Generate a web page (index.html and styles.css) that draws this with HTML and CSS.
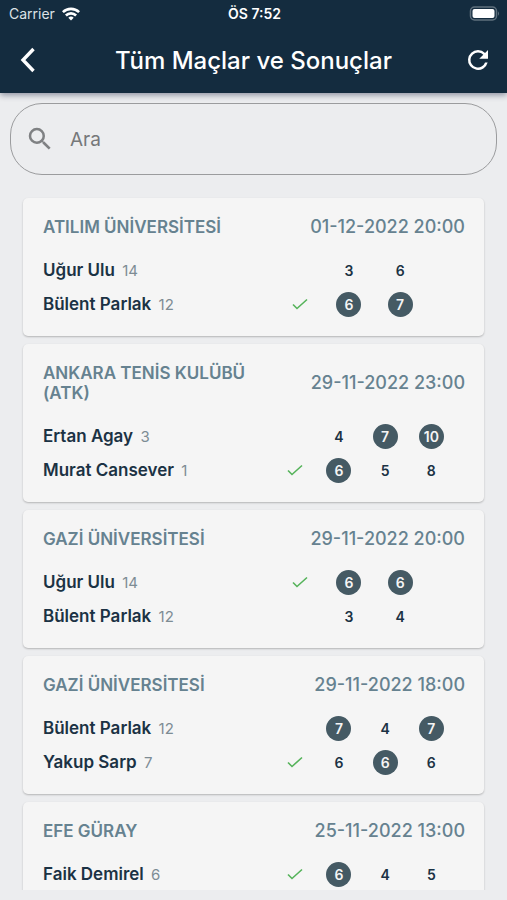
FILE: index.html
```html
<!DOCTYPE html>
<html lang="tr">

<head>
  <meta charset="utf-8">
  <title>Tüm Maçlar ve Sonuçlar</title>
  <meta name="viewport" content="width=device-width, initial-scale=1">
  <link rel="stylesheet" href="styles.css">
</head>

<body>
  <header class="topbar">
    <div class="status">
      <div class="carrier">
        <span>Carrier</span>
        <svg width="18" height="14" viewBox="0 0 18 14" fill="none" stroke="#fff" stroke-width="2.6">
          <path d="M0.9 5.2a11.5 11.5 0 0 1 16.2 0" />
          <path d="M3.9 8.5a7.2 7.2 0 0 1 10.2 0" />
          <path d="M9 13.6l-2.7-2.8a3.9 3.9 0 0 1 5.4 0z" fill="#fff" stroke="none" />
        </svg>
      </div>
      <span class="clock">ÖS 7:52</span>
      <div class="battery">
        <svg width="31" height="15" viewBox="0 0 31 15">
          <rect x="1.5" y="1" width="26" height="13" rx="4" fill="none" stroke="#5f707d" stroke-width="1.5" />
          <rect x="3.5" y="3" width="22" height="9" rx="2" fill="#fff" />
          <path d="M29 5.2q2 2.3 0 4.6z" fill="#5f707d" />
        </svg>
      </div>
    </div>
    <div class="nav">
      <button class="icon-btn" aria-label="Geri">
        <svg width="18" height="26" viewBox="0 0 18 26" fill="none" stroke="#fff" stroke-width="3.4">
          <path d="M13.5 2L3 13l10.5 11" />
        </svg>
      </button>
      <h1>Tüm Maçlar ve Sonuçlar</h1>
      <button class="icon-btn" aria-label="Yenile">
        <svg width="30" height="30" viewBox="0 0 24 24" fill="#fff">
          <path d="M17.65 6.35A7.96 7.96 0 0 0 12 4a8 8 0 1 0 7.73 10h-2.08A6 6 0 1 1 12 6c1.66 0 3.14.69 4.22 1.78L13 11h7V4z" />
        </svg>
      </button>
    </div>
  </header>

  <label class="search">
    <svg width="30" height="30" viewBox="0 0 24 24" fill="#7f8183">
      <path d="M15.5 14h-.79l-.28-.27A6.47 6.47 0 0 0 16 9.5 6.5 6.5 0 1 0 9.5 16c1.61 0 3.09-.59 4.23-1.57l.27.28v.79l5 4.99L20.49 19zm-6 0a4.5 4.5 0 1 1 0-9 4.5 4.5 0 0 1 0 9z" />
    </svg>
    <input type="text" placeholder="Ara" aria-label="Ara">
  </label>

  <main class="list" id="list"></main>

  <script src="script.js"></script>
</body>

</html>
```
FILE: styles.css
```css
* {
  box-sizing: border-box;
}

body {
  margin: 0;
  height: 100vh;
  display: flex;
  flex-direction: column;
  background-color: #ecedef;
  font-family: Inter, "Liberation Sans", sans-serif;
  color: #1b3244;
}

.topbar {
  background-color: #142c3f;
  color: #fff;
  box-shadow: 0 2px 6px rgba(20, 30, 60, .45);
}

.status {
  display: grid;
  grid-template-columns: 1fr auto 1fr;
  align-items: center;
  height: 27px;
  padding: 0 7px 0 9px;
  font-size: 14px;
}

.carrier {
  display: flex;
  align-items: center;
  gap: 7px;
  color: #dde2e6;
}

.clock {
  font-weight: 600;
}

.battery {
  display: flex;
  justify-content: flex-end;
}

.nav {
  display: flex;
  align-items: center;
  justify-content: space-between;
  height: 66px;
  padding: 0 9px;
}

h1 {
  margin: 0;
  font-size: 24px;
  font-weight: 500;
}

.icon-btn {
  display: flex;
  align-items: center;
  justify-content: center;
  width: 40px;
  height: 40px;
  padding: 0;
  border: none;
  background: none;
}

.search {
  display: flex;
  flex-shrink: 0;
  align-items: center;
  gap: 15px;
  height: 72px;
  margin: 10px 10px 0;
  padding: 0 14px;
  border: 1px solid #9b9c9e;
  border-radius: 32px;
}

.search input {
  flex: 1;
  min-width: 0;
  padding: 0;
  border: none;
  outline: none;
  background: none;
  font-family: inherit;
  font-size: 19px;
  color: #1b3244;
}

.search input::placeholder {
  color: #76787a;
  opacity: 1;
}

.list {
  flex: 1;
  min-height: 0;
  display: flex;
  flex-direction: column;
  gap: 8px;
  margin: 20px 20px 10px;
  padding: 3px 3px 0;
  overflow-y: auto;
  scrollbar-width: none;
}

.card {
  flex-shrink: 0;
  padding: 19px 19px 15px 20px;
  border-radius: 5px;
  background-color: #f5f5f5;
  box-shadow: 0 1px 2px rgba(0, 0, 0, .24);
}

.card-head {
  display: flex;
  align-items: center;
  justify-content: space-between;
  gap: 40px;
  margin-bottom: 16px;
  line-height: 20px;
  color: #668290;
}

.card-head h2 {
  margin: 0;
  font-size: 17px;
  font-weight: 600;
}

.card-head time {
  flex-shrink: 0;
  font-size: 18px;
  font-weight: 500;
}

.row {
  display: flex;
  align-items: center;
  height: 34px;
}

.player {
  flex: 11;
  font-size: 17px;
  font-weight: 600;
  white-space: nowrap;
}

.rank {
  margin-left: 3px;
  font-size: 15px;
  font-weight: 400;
  color: #7d8c94;
}

.sets {
  flex: 10;
  display: flex;
  align-items: center;
  justify-content: space-evenly;
}

.check {
  width: 20px;
  height: 20px;
  fill: none;
  stroke: none;
}

.check.winner {
  stroke: #55b35a;
  stroke-width: 1.6;
}

.set {
  width: 25px;
  border-radius: 50%;
  font-size: 14px;
  font-weight: 600;
  line-height: 25px;
  text-align: center;
}

.set.won {
  background-color: #455a64;
  color: #f5f5f5;
}

/* keeps the place of a third set that was not played */
.set.unplayed {
  width: 0;
}
```
FILE: script.js
```javascript
var matches = [
  { place: "ATILIM ÜNİVERSİTESİ", date: "01-12-2022 20:00", players: [
    { name: "Uğur Ulu", rank: 14, sets: [3, 6] },
    { name: "Bülent Parlak", rank: 12, sets: [6, 7], won: [0, 1], winner: true }
  ] },
  { place: "ANKARA TENİS KULÜBÜ (ATK)", date: "29-11-2022 23:00", players: [
    { name: "Ertan Agay", rank: 3, sets: [4, 7, 10], won: [1, 2] },
    { name: "Murat Cansever", rank: 1, sets: [6, 5, 8], won: [0], winner: true }
  ] },
  { place: "GAZİ ÜNİVERSİTESİ", date: "29-11-2022 20:00", players: [
    { name: "Uğur Ulu", rank: 14, sets: [6, 6], won: [0, 1], winner: true },
    { name: "Bülent Parlak", rank: 12, sets: [3, 4] }
  ] },
  { place: "GAZİ ÜNİVERSİTESİ", date: "29-11-2022 18:00", players: [
    { name: "Bülent Parlak", rank: 12, sets: [7, 4, 7], won: [0, 2] },
    { name: "Yakup Sarp", rank: 7, sets: [6, 6, 6], won: [1], winner: true }
  ] },
  { place: "EFE GÜRAY", date: "25-11-2022 13:00", players: [
    { name: "Faik Demirel", rank: 6, sets: [6, 4, 5], won: [0], winner: true }
  ] }
];

function playerRow(player) {
  var won = player.won || [];
  var sets = player.sets.map(function (score, i) {
    return `<span class="set${won.includes(i) ? " won" : ""}">${score}</span>`;
  });
  if (sets.length < 3) {
    sets.push('<span class="set unplayed"></span>');
  }
  return `
    <div class="row">
      <div class="player">${player.name} <span class="rank">${player.rank}</span></div>
      <div class="sets">
        <svg class="check${player.winner ? " winner" : ""}" viewBox="0 0 20 20"><path d="M3 10.5l4 4L17 5.5" /></svg>
        ${sets.join("")}
      </div>
    </div>`;
}

document.getElementById("list").innerHTML = matches.map(function (match) {
  return `
    <article class="card">
      <div class="card-head"><h2>${match.place}</h2><time>${match.date}</time></div>
      ${match.players.map(playerRow).join("")}
    </article>`;
}).join("");
```
